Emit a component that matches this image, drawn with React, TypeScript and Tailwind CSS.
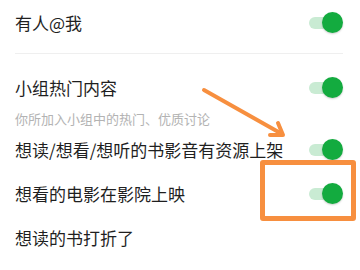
function Toggle() {
  return (
    <div className="relative w-[34px] h-[22px] shrink-0">
      <div className="absolute left-0 top-[5px] w-[26px] h-[12px] rounded-full bg-[#c9ebd3]" />
      <div className="absolute right-0 top-0 w-[21px] h-[21px] rounded-full bg-[#13ab3f] shadow-[0_1px_2px_rgba(0,0,0,0.2)]" />
    </div>
  );
}

export default function App() {
  return (
    <div
      className="relative w-[360px] h-[270px] bg-white overflow-hidden text-[#1f1f1f]"
      style={{ fontFamily: '"Noto Sans CJK SC", "Noto Sans", sans-serif' }}
    >
      <div className="flex flex-col pl-[15px] pr-[17px]">
        <div className="flex items-center justify-between h-[45px]">
          <span className="text-[17px]">有人@我</span>
          <Toggle />
        </div>
        <div className="mt-[8px] h-px bg-[#efefef]" />

        <div className="flex items-center justify-between h-[44px] mt-[12px]">
          <span className="text-[17px]">小组热门内容</span>
          <Toggle />
        </div>
        <div className="h-[18px] flex items-center text-[13px] text-[#b3b3b3]">
          你所加入小组中的热门、优质讨论
        </div>

        <div className="flex items-center justify-between h-[44px]">
          <span className="text-[17px]">想读/想看/想听的书影音有资源上架</span>
          <Toggle />
        </div>
        <div className="flex items-center justify-between h-[44px]">
          <span className="text-[17px]">想看的电影在影院上映</span>
          <Toggle />
        </div>
        <div className="flex items-center h-[44px]">
          <span className="text-[17px]">想读的书打折了</span>
        </div>
      </div>

      {/* annotation: highlight box */}
      <div className="absolute left-[260px] top-[160px] w-[96px] h-[61px] border-[5px] border-[#f78f3f] rounded-[3px]" />

      {/* annotation: arrow */}
      <svg className="absolute left-0 top-0" width="360" height="270" viewBox="0 0 360 270">
        <g stroke="#f78f3f" strokeWidth="4" strokeLinecap="round" fill="none">
          <line x1="204" y1="90" x2="282" y2="134" />
          <polyline points="270,135 283,135 278,123" strokeLinejoin="round" />
        </g>
      </svg>
    </div>
  );
}
